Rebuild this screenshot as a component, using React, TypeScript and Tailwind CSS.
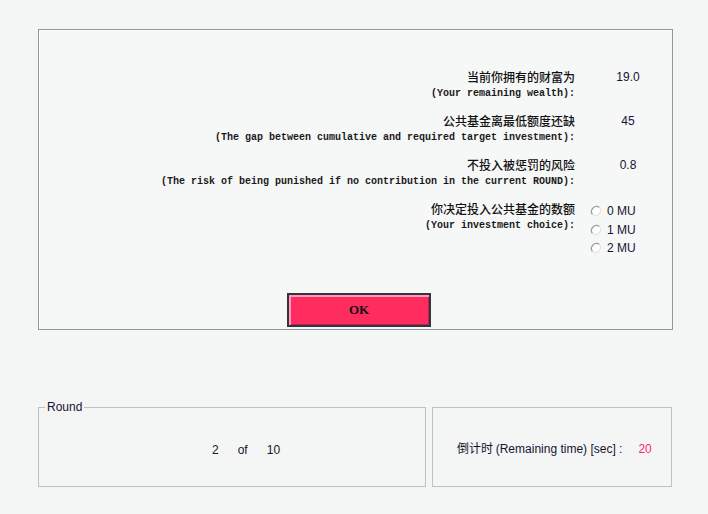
import React from "react";

function Radio({ label }: { label: string }) {
  return (
    <div className="flex h-[18.5px] items-center gap-[5px]">
      <svg width="12" height="12" viewBox="0 0 12 12">
        <circle cx="6" cy="6" r="5" fill="#ffffff" />
        <path d="M9.5 2.5 A5 5 0 0 0 2.5 9.5" fill="none" stroke="#9aa0a0" strokeWidth="1.3" />
        <path d="M2.5 9.5 A5 5 0 0 0 9.5 2.5" fill="none" stroke="#e4e6e6" strokeWidth="1.2" />
      </svg>
      <span className="font-['Liberation_Sans',sans-serif] text-[12px] text-[#141432]">{label}</span>
    </div>
  );
}

function Row({ zh, en, children }: { zh: string; en: string; children: React.ReactNode }) {
  return (
    <div className="flex">
      <div className="w-[536px] shrink-0 text-right">
        <div className="h-[17px] font-['Noto_Sans_CJK_SC',sans-serif] text-[12px] leading-[18px] font-medium text-[#111]">{zh}</div>
        <div className="h-[17px] whitespace-nowrap font-['Liberation_Mono',monospace] text-[10px] leading-[17px] font-bold text-[#1a1a1a]">{en}</div>
      </div>
      <div className="ml-[15px] w-[76px]">{children}</div>
    </div>
  );
}

function Value({ v }: { v: string }) {
  return (
    <div className="h-[17px] text-center font-['Liberation_Sans',sans-serif] text-[12px] leading-[18px] text-[#141432]">{v}</div>
  );
}

export default function App() {
  return (
    <div className="h-[514px] w-[708px] overflow-hidden bg-[#f4f5f5] pt-[29px] pl-[38px]">
      <div className="h-[301px] w-[635px] border border-[#8e9a9a] bg-[#f6f7f7] pt-[38px] shadow-[inset_1px_1px_0_#ffffff]">
        <div className="flex flex-col gap-[10px]">
          <Row zh="当前你拥有的财富为" en="(Your remaining wealth):">
            <Value v="19.0" />
          </Row>
          <Row zh="公共基金离最低额度还缺" en="(The gap between cumulative and required target investment):">
            <Value v="45" />
          </Row>
          <Row zh="不投入被惩罚的风险" en="(The risk of being punished if no contribution in the current ROUND):">
            <Value v="0.8" />
          </Row>
          <Row zh="你决定投入公共基金的数额" en="(Your investment choice):">
            <div className="pt-[2px]">
              <Radio label="0 MU" />
              <Radio label="1 MU" />
              <Radio label="2 MU" />
            </div>
          </Row>
        </div>
        <button className="mt-[35px] ml-[248px] flex h-[34px] w-[144px] items-center justify-center border-2 border-[#333344] bg-[#ff2d5f] font-['Liberation_Serif',serif] text-[13px] font-bold text-[#111] shadow-[inset_2px_2px_0_#ff9cb8,inset_-1px_-1px_0_#c0204a]">
          OK
        </button>
      </div>

      <div className="mt-[71px] flex items-start gap-[6px]">
        <fieldset className="h-[86px] w-[388px] border border-[#b9c4c4] px-0">
          <legend className="ml-[6px] px-[2px] font-['Liberation_Sans',sans-serif] text-[12px] leading-[12px] text-[#141432]">Round</legend>
          <div className="flex h-full items-center gap-[19px] pl-[173px] font-['Liberation_Sans',sans-serif] text-[12px] text-[#141432]">
            <span>2</span>
            <span>of</span>
            <span>10</span>
          </div>
        </fieldset>
        <div className="mt-[6px] flex h-[80px] w-[240px] items-center border border-[#b9c4c4] pl-[24px] pt-[3px] font-['Noto_Sans_CJK_SC',sans-serif] text-[12px] text-[#141432]">
          <span>
            倒计时 <span className="font-['Liberation_Sans',sans-serif]">(Remaining time) [sec] :</span>
          </span>
          <span className="ml-[16px] font-['Liberation_Sans',sans-serif] text-[#ff1f6b]">20</span>
        </div>
      </div>
    </div>
  );
}
